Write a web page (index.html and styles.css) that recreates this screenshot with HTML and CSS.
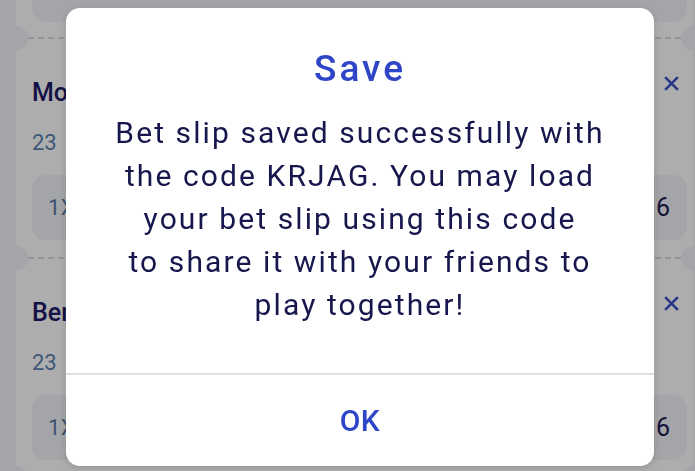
FILE: index.html
```html
<!DOCTYPE html>
<html>
<head>
<meta charset="utf-8">
<link rel="stylesheet" href="styles.css">
</head>
<body>
<div class="page">
  <div class="slip">
    <div class="odds odds-top"></div>
    <div class="sep"><span class="notch notch-l"></span><span class="dash"></span><span class="notch notch-r"></span></div>
    <div class="leg">
      <div class="leg-head"><span class="leg-title">Monaco</span><svg class="close" viewBox="0 0 16 16"><path d="M2 2L14 14M14 2L2 14"/></svg></div>
      <div class="leg-date">23 Nov</div>
      <div class="odds"><span class="pick">1X</span><span class="price">1.16</span></div>
    </div>
    <div class="sep"><span class="notch notch-l"></span><span class="dash"></span><span class="notch notch-r"></span></div>
    <div class="leg">
      <div class="leg-head"><span class="leg-title">Benfica</span><svg class="close" viewBox="0 0 16 16"><path d="M2 2L14 14M14 2L2 14"/></svg></div>
      <div class="leg-date">23 Nov</div>
      <div class="odds"><span class="pick">1X</span><span class="price">1.16</span></div>
    </div>
    <div class="sep"><span class="notch notch-l"></span><span class="dash"></span><span class="notch notch-r"></span></div>
  </div>
</div>
<div class="overlay">
  <div class="dialog">
    <div class="dialog-title">Save</div>
    <div class="dialog-body">Bet slip saved successfully with<br>the code KRJAG. You may load<br>your bet slip using this code<br>to share it with your friends to<br>play together!</div>
    <div class="dialog-actions"><span class="ok">OK</span></div>
  </div>
</div>
</body>
</html>
```
FILE: styles.css
```css
html, body {
  margin: 0;
  padding: 0;
  width: 695px;
  height: 471px;
  overflow: hidden;
  background: #f3f4fa;
  font-family: Roboto, "Noto Sans", sans-serif;
}
.page {
  padding-left: 16px;
  padding-right: 2px;
}
.slip {
  background: #ffffff;
  padding: 0 6px 0 16px;
}
.odds {
  background: #f1f3f8;
  border-radius: 14px;
  height: 65px;
  display: flex;
  align-items: center;
  justify-content: space-between;
  padding: 0 0 0 16px;
  overflow: hidden;
}
.odds-top {
  height: 22px;
  border-radius: 0 0 14px 14px;
}
.pick {
  font-size: 22px;
  color: #5b7aa6;
  letter-spacing: 0.5px;
}
.price {
  font-size: 25px;
  font-weight: 400;
  color: #1c1c52;
  padding-right: 17px;
}
.sep {
  position: relative;
  height: 32px;
  display: flex;
  align-items: center;
  margin: 0 -6px 0 -16px;
}
.dash {
  flex: 1;
  margin: 0 12px;
  border-top: 2px dashed #d8dadf;
}
.notch {
  position: absolute;
  top: 4px;
  width: 24px;
  height: 24px;
  border-radius: 50%;
  background: #f3f4fa;
}
.notch-l { left: -12px; }
.notch-r { right: -12px; }
.leg {
  padding-top: 24px;
  padding-bottom: 2px;
}
.leg-head {
  display: flex;
  justify-content: space-between;
  align-items: center;
  height: 28px;
}
.leg-title {
  font-size: 25px;
  font-weight: 500;
  color: #1c1a66;
}
.close {
  width: 17px;
  height: 17px;
  margin-right: 7px;
  margin-top: -18px;
  fill: none;
  stroke: #3a50c8;
  stroke-width: 2.4;
}
.leg-date {
  margin-top: 24px;
  font-size: 22px;
  line-height: 26px;
  word-spacing: 6px;
  color: #5b82b0;
  height: 26px;
}
.leg .odds {
  margin-top: 19px;
}
.overlay {
  position: fixed;
  inset: 0;
  background: rgba(0, 0, 0, 0.32);
}
.dialog {
  position: absolute;
  left: 66px;
  top: 8px;
  width: 588px;
  height: 458px;
  background: #ffffff;
  border-radius: 14px;
  display: flex;
  flex-direction: column;
  box-shadow: 0 2px 8px rgba(0,0,0,0.15);
}
.dialog-title {
  margin-top: 41px;
  text-align: center;
  font-size: 37px;
  font-weight: 500;
  letter-spacing: 3px;
  line-height: 40px;
  color: #2f45c8;
}
.dialog-body {
  margin-top: 22px;
  text-align: center;
  font-size: 30px;
  line-height: 43px;
  letter-spacing: 2.1px;
  color: #17174d;
}
.dialog-actions {
  margin-top: auto;
  border-top: 2px solid #dde1e6;
  height: 91px;
  display: flex;
  align-items: center;
  justify-content: center;
}
.ok {
  font-size: 30px;
  font-weight: 500;
  letter-spacing: 0.5px;
  color: #2f45c8;
}
```
